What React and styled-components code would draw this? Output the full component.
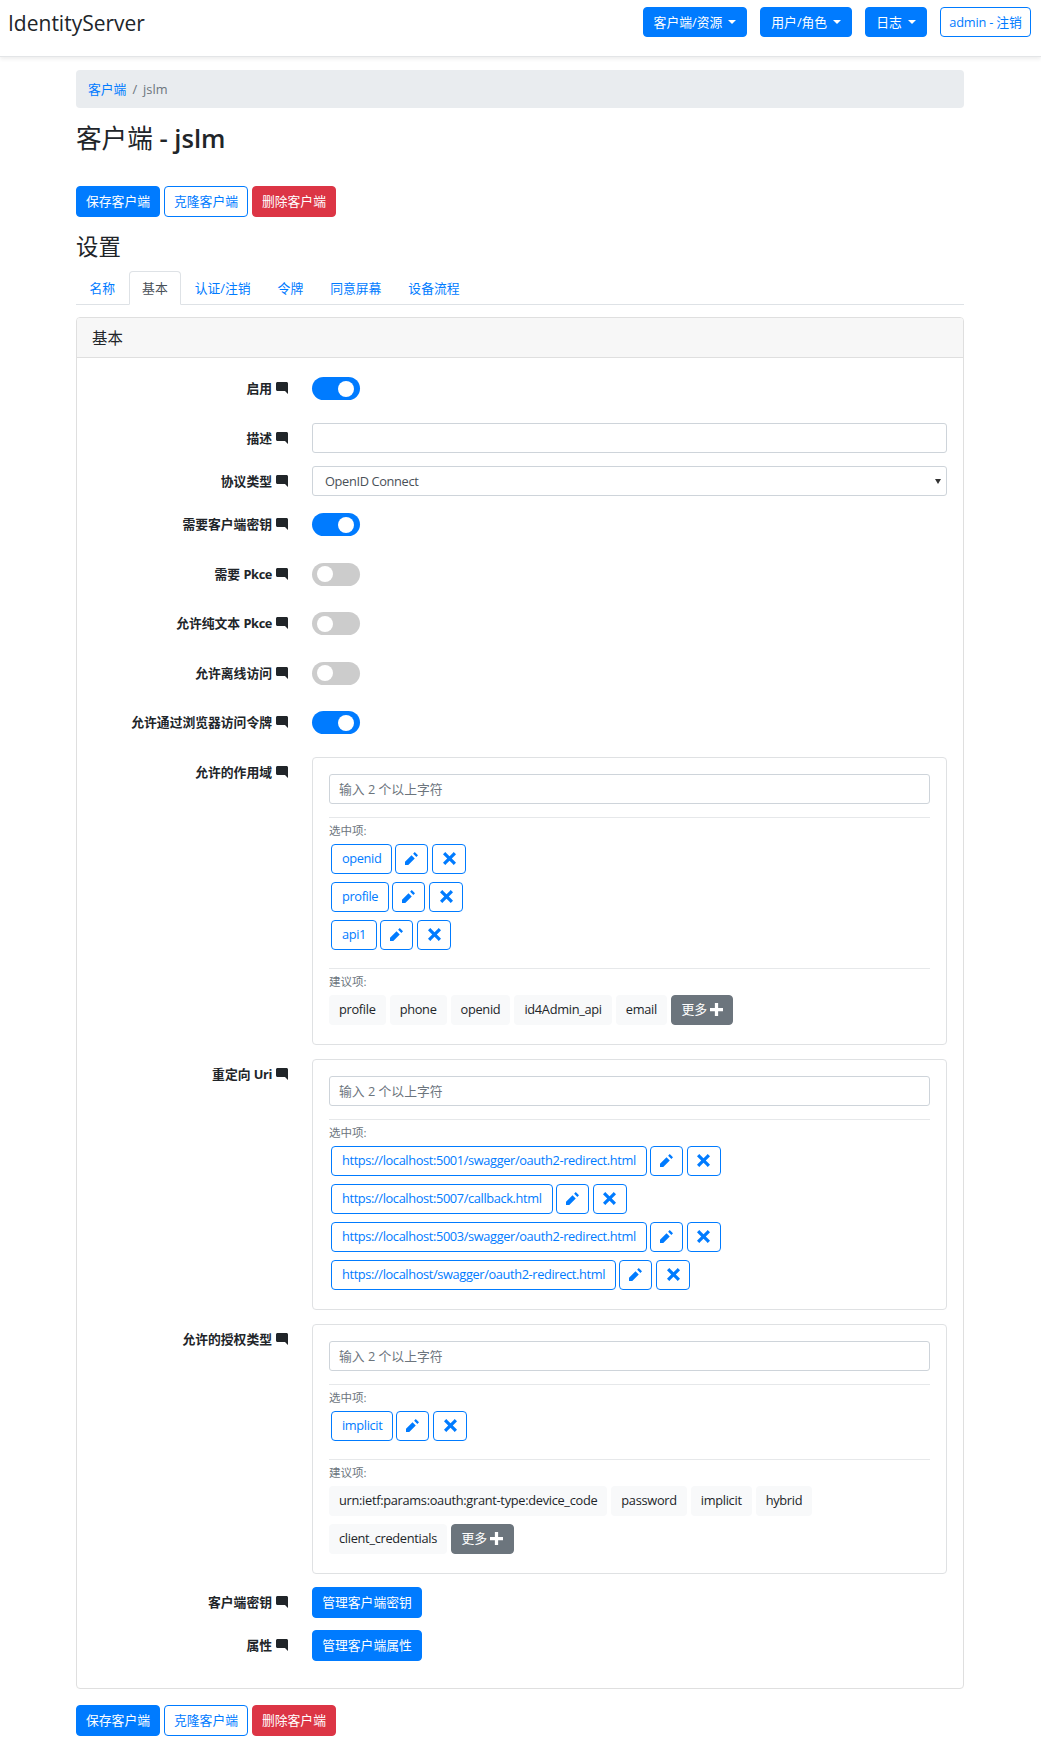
import React from "react";
import styled, { createGlobalStyle } from "styled-components";

const GlobalStyle = createGlobalStyle`
  * { box-sizing: border-box; }
  body {
    margin: 0;
    background: #fff;
    color: #212529;
    font-family: "Open Sans", "Noto Sans CJK SC", sans-serif;
    font-size: 12.8px;
    line-height: 19px;
  }
`;

const Navbar = styled.nav`
  height: 57px;
  display: flex;
  align-items: flex-start;
  justify-content: space-between;
  padding: 7px 10px 0 8px;
  border-bottom: 1px solid #e3e5e7;
  box-shadow: 0 2px 4px rgba(0, 0, 0, 0.075);
`;

const Brand = styled.div`
  font-size: 21px;
  line-height: 32px;
`;

const NavActions = styled.div`
  display: flex;
  gap: 13px;
`;

const Btn = styled.button`
  display: inline-flex;
  align-items: center;
  justify-content: center;
  height: ${(p) => p.$h || 31}px;
  padding: 0 ${(p) => p.$px || 9}px;
  font: inherit;
  border-radius: 4px;
  border: 1px solid ${(p) => (p.$kind === "danger" ? "#dc3545" : p.$kind === "grey" ? "#6c757d" : "#007bff")};
  background: ${(p) => (p.$kind === "danger" ? "#dc3545" : p.$kind === "grey" ? "#6c757d" : p.$kind === "outline" ? "#fff" : "#007bff")};
  color: ${(p) => (p.$kind === "outline" ? "#007bff" : "#fff")};
`;

const Caret = styled.span`
  width: 0;
  height: 0;
  margin-left: 6px;
  border-top: 4px solid currentColor;
  border-left: 4px solid transparent;
  border-right: 4px solid transparent;
`;

const AdminBtn = styled(Btn)`
  padding: 0 8.5px;
  letter-spacing: -0.2px;
`;

const Page = styled.main`
  width: 888px;
  margin: 13px 0 0 76px;
  padding-bottom: 8px;
`;

const Breadcrumb = styled.div`
  height: 38px;
  display: flex;
  align-items: center;
  padding: 1px 12px 0;
  background: #e9ecef;
  border-radius: 4px;
  color: #6c757d;
`;

const Crumb = styled.span`
  color: #007bff;
`;

const CrumbSep = styled.span`
  margin: 0 6px;
`;

const Title = styled.h1`
  margin: 14px 0 30px;
  font-size: 25.6px;
  line-height: 34px;
  font-weight: 400;
`;

const TitleName = styled.span`
  font-weight: 600;
`;

const ButtonBar = styled.div`
  display: flex;
  gap: 4px;
  margin-top: ${(p) => p.$mt || 0}px;
`;

const SectionTitle = styled.h2`
  margin: 14px 0 8px;
  font-size: 22.4px;
  line-height: 32px;
  font-weight: 400;
`;

const Tabs = styled.div`
  display: flex;
  height: 34px;
  border-bottom: 1px solid #dee2e6;
`;

const Tab = styled.div`
  height: 34px;
  padding: 7px 12.5px 0;
  border: 1px solid ${(p) => (p.$active ? "#dee2e6" : "transparent")};
  border-bottom-color: ${(p) => (p.$active ? "#fff" : "transparent")};
  border-radius: 4px 4px 0 0;
  background: ${(p) => (p.$active ? "#fff" : "transparent")};
  color: ${(p) => (p.$active ? "#495057" : "#007bff")};
`;

const Card = styled.section`
  margin-top: 12px;
  border: 1px solid #dfdfdf;
  border-radius: 4px;
`;

const CardHeader = styled.header`
  height: 40px;
  padding: 1px 15px 0;
  display: flex;
  align-items: center;
  font-size: 15.4px;
  background: #f7f7f7;
  border-bottom: 1px solid #dfdfdf;
  border-radius: 3px 3px 0 0;
`;

const CardBody = styled.div`
  padding: 15px 16px 15px;
`;

const Row = styled.div`
  display: flex;
  gap: 24px;
  margin-bottom: ${(p) => p.$mb ?? 14}px;
  min-height: ${(p) => p.$minH || 0}px;
`;

const Label = styled.div`
  flex: 0 0 195px;
  display: flex;
  justify-content: flex-end;
  align-items: flex-start;
  gap: 4px;
  padding-top: 6px;
  font-weight: 700;
`;

const LatinTerm = styled.span`
  letter-spacing: -0.4px;
`;

const LabelIcon = styled.svg`
  width: 12px;
  height: 12px;
  margin-top: 3px;
  flex: none;
  fill: #212529;
`;

const Field = styled.div`
  flex: 1;
  min-width: 0;
`;

const Switch = styled.div`
  width: 48px;
  height: 23px;
  margin-top: 4px;
  padding: 0 6px 0 5px;
  border-radius: 12px;
  display: flex;
  align-items: center;
  justify-content: ${(p) => (p.$on ? "flex-end" : "flex-start")};
  background: ${(p) => (p.$on ? "#007bff" : "#ccc")};
`;

const Knob = styled.span`
  width: 16px;
  height: 16px;
  border-radius: 50%;
  background: #fff;
`;

const Input = styled.input`
  display: block;
  width: 100%;
  height: 30px;
  padding: 0 9px;
  font: inherit;
  color: #495057;
  border: 1px solid #ced4da;
  border-radius: 3px;
  background: #fff;
  &::placeholder { color: #6c757d; opacity: 1; }
`;

const SelectBox = styled.div`
  height: 30px;
  padding: 0 5px 0 12px;
  display: flex;
  align-items: center;
  justify-content: space-between;
  color: #495057;
  letter-spacing: -0.35px;
  border: 1px solid #ced4da;
  border-radius: 3px;
`;

const SelectArrow = styled.span`
  width: 0;
  height: 0;
  border-top: 5px solid #333;
  border-left: 3px solid transparent;
  border-right: 3px solid transparent;
`;

const Box = styled.div`
  padding: 16px 16px 11px;
  border: 1px solid #dfe1e3;
  border-radius: 4px;
`;

const Divider = styled.hr`
  margin: ${(p) => p.$mt}px 0 0;
  border: 0;
  border-top: 1px solid #e6e8ea;
`;

const SmallLabel = styled.div`
  height: 26px;
  line-height: 26px;
  font-size: 11.5px;
  color: #6c757d;
`;

const TagRow = styled.div`
  display: flex;
  margin: 0 0 8px 2px;
`;

const TagText = styled(Btn)`
  padding: 0 10px;
  margin-right: 3px;
  letter-spacing: -0.37px;
  white-space: nowrap;
`;

const TagIcon = styled(Btn)`
  width: ${(p) => p.$w}px;
  padding: 0;
  margin-right: 4px;
`;

const Glyph = styled.svg`
  width: 13px;
  height: 13px;
  fill: currentColor;
`;

const Suggestions = styled.div`
  display: flex;
  flex-wrap: wrap;
  gap: 8px 4px;
  margin-bottom: 8px;
  padding-right: 14px;
`;

const Suggestion = styled.div`
  height: 30px;
  padding: 0 10px;
  display: flex;
  align-items: center;
  background: #f8f9fa;
  border-radius: 4px;
  letter-spacing: -0.3px;
  white-space: nowrap;
`;

const MoreBtn = styled(Btn)`
  gap: 3px;
  padding: 0 9.5px;
  height: 30px;
`;

const ManageBtn = styled(Btn)`
  width: 110px;
  padding: 0;
`;

const COMMENT = "M1 0c-.55 0-1 .45-1 1v4c0 .55.45 1 1 1h5l2 2v-7c0-.55-.45-1-1-1h-6z";
const PENCIL = "M6 0l-1 1 2 2 1-1-2-2zm-2 2l-4 4v2h2l4-4-2-2z";
const CROSS = "M1.41 0l-1.41 1.41.72.72 1.88 1.88-1.88 1.88-.72.69 1.41 1.44.72-.72 1.88-1.88 1.88 1.88.69.72 1.44-1.44-.72-.69-1.88-1.88 1.88-1.88.72-.72-1.44-1.41-.69.72-1.88 1.88-1.88-1.88-.72-.72z";
const PLUS = "M3 0v3h-3v2h3v3h2v-3h3v-2h-3v-3h-2z";

const Icon = ({ d }) => (
  <Glyph viewBox="0 0 8 8"><path d={d} /></Glyph>
);

const FieldLabel = ({ children }) => (
  <Label>
    <span>{children}</span>
    <LabelIcon viewBox="0 0 8 8"><path d={COMMENT} /></LabelIcon>
  </Label>
);

const SwitchRow = ({ label, on }) => (
  <Row $minH={35.5}>
    <FieldLabel>{label}</FieldLabel>
    <Field>
      <Switch $on={on}><Knob /></Switch>
    </Field>
  </Row>
);

const Actions = ({ mt }) => (
  <ButtonBar $mt={mt}>
    <Btn>保存客户端</Btn>
    <Btn $kind="outline">克隆客户端</Btn>
    <Btn $kind="danger">删除客户端</Btn>
  </ButtonBar>
);

const Picker = ({ selected, suggested }) => (
  <Box>
    <Input placeholder="输入 2 个以上字符" />
    <Divider $mt={13} />
    <SmallLabel>选中项:</SmallLabel>
    {selected.map((item) => (
      <TagRow key={item}>
        <TagText $kind="outline" $h={30}>{item}</TagText>
        <TagIcon $kind="outline" $h={30} $w={33}><Icon d={PENCIL} /></TagIcon>
        <TagIcon $kind="outline" $h={30} $w={34}><Icon d={CROSS} /></TagIcon>
      </TagRow>
    ))}
    {suggested && (
      <>
        <Divider $mt={18} />
        <SmallLabel>建议项:</SmallLabel>
        <Suggestions>
          {suggested.map((item) => (
            <Suggestion key={item}>{item}</Suggestion>
          ))}
          <MoreBtn $kind="grey">更多<Icon d={PLUS} /></MoreBtn>
        </Suggestions>
      </>
    )}
  </Box>
);

export default function App() {
  return (
    <>
      <GlobalStyle />
      <Navbar>
        <Brand>IdentityServer</Brand>
        <NavActions>
          <Btn $h={30} $px={10}>客户端/资源<Caret /></Btn>
          <Btn $h={30} $px={10}>用户/角色<Caret /></Btn>
          <Btn $h={30} $px={10}>日志<Caret /></Btn>
          <AdminBtn $h={30} $kind="outline">admin - 注销</AdminBtn>
        </NavActions>
      </Navbar>
      <Page>
        <Breadcrumb>
          <Crumb>客户端</Crumb>
          <CrumbSep>/</CrumbSep>
          jslm
        </Breadcrumb>
        <Title>客户端 <TitleName>- jslm</TitleName></Title>
        <Actions />
        <SectionTitle>设置</SectionTitle>
        <Tabs>
          <Tab>名称</Tab>
          <Tab $active>基本</Tab>
          <Tab>认证/注销</Tab>
          <Tab>令牌</Tab>
          <Tab>同意屏幕</Tab>
          <Tab>设备流程</Tab>
        </Tabs>
        <Card>
          <CardHeader>基本</CardHeader>
          <CardBody>
            <SwitchRow label="启用" on />
            <Row $mb={13.5}>
              <FieldLabel>描述</FieldLabel>
              <Field><Input /></Field>
            </Row>
            <Row $mb={13}>
              <FieldLabel>协议类型</FieldLabel>
              <Field>
                <SelectBox>OpenID Connect<SelectArrow /></SelectBox>
              </Field>
            </Row>
            <SwitchRow label="需要客户端密钥" on />
            <SwitchRow label={<>需要 <LatinTerm>Pkce</LatinTerm></>} />
            <SwitchRow label={<>允许纯文本 <LatinTerm>Pkce</LatinTerm></>} />
            <SwitchRow label="允许离线访问" />
            <SwitchRow label="允许通过浏览器访问令牌" on />
            <Row>
              <FieldLabel>允许的作用域</FieldLabel>
              <Field>
                <Picker
                  selected={["openid", "profile", "api1"]}
                  suggested={["profile", "phone", "openid", "id4Admin_api", "email"]}
                />
              </Field>
            </Row>
            <Row>
              <FieldLabel>重定向 <LatinTerm>Uri</LatinTerm></FieldLabel>
              <Field>
                <Picker
                  selected={[
                    "https://localhost:5001/swagger/oauth2-redirect.html",
                    "https://localhost:5007/callback.html",
                    "https://localhost:5003/swagger/oauth2-redirect.html",
                    "https://localhost/swagger/oauth2-redirect.html",
                  ]}
                />
              </Field>
            </Row>
            <Row $mb={13}>
              <FieldLabel>允许的授权类型</FieldLabel>
              <Field>
                <Picker
                  selected={["implicit"]}
                  suggested={[
                    "urn:ietf:params:oauth:grant-type:device_code",
                    "password",
                    "implicit",
                    "hybrid",
                    "client_credentials",
                  ]}
                />
              </Field>
            </Row>
            <Row $mb={12}>
              <FieldLabel>客户端密钥</FieldLabel>
              <Field><ManageBtn>管理客户端密钥</ManageBtn></Field>
            </Row>
            <Row $mb={12}>
              <FieldLabel>属性</FieldLabel>
              <Field><ManageBtn>管理客户端属性</ManageBtn></Field>
            </Row>
          </CardBody>
        </Card>
        <Actions mt={16} />
      </Page>
    </>
  );
}
